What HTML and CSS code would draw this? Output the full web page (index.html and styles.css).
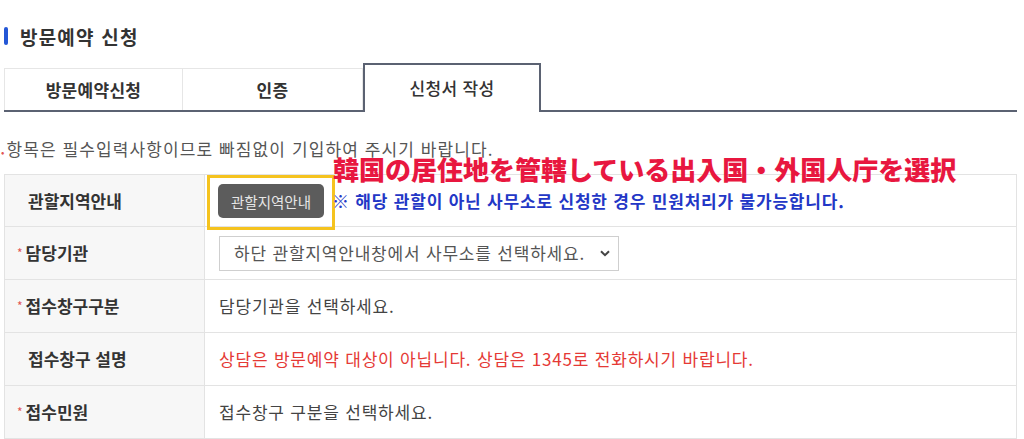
FILE: index.html
```html
<!DOCTYPE html>
<html lang="ko">
<head>
  <meta charset="UTF-8" />
  <meta name="viewport" content="width=device-width, initial-scale=1" />
  <title>방문예약 신청</title>
  <link rel="stylesheet" href="styles.css">
</head>
<body>

  <h2 class="page-title">방문예약 신청</h2>

  <ul class="tabs">
    <li class="tab">방문예약신청</li>
    <li class="tab">인증</li>
    <li class="tab tab-active">신청서 작성</li>
  </ul>

  <p class="notice"><span class="req-dot">•</span>항목은 필수입력사항이므로 빠짐없이 기입하여 주시기 바랍니다.</p>

  <div class="form-wrap">
    <div class="annotation" lang="ja">韓国の居住地を管轄している出入国・外国人庁を選択</div>
    <table class="form-table">
      <tr class="row-first">
        <th><span class="label">관할지역안내</span></th>
        <td class="guide-td">
          <div class="guide-cell">
            <div class="highlight">
              <button class="btn-guide" type="button">관할지역안내</button>
            </div>
            <span class="warn-blue">※ 해당 관할이 아닌 사무소로 신청한 경우 민원처리가 불가능합니다.</span>
          </div>
        </td>
      </tr>
      <tr>
        <th><span class="req">*</span>담당기관</th>
        <td>
          <div class="select-box">
            <span>하단 관할지역안내창에서 사무소를 선택하세요.</span>
            <svg class="chevron" width="10" height="7" viewBox="0 0 10 7"><path d="M1 1.2 L5 5.2 L9 1.2" fill="none" stroke="#444" stroke-width="2"/></svg>
          </div>
        </td>
      </tr>
      <tr>
        <th><span class="req">*</span>접수창구구분</th>
        <td>담당기관을 선택하세요.</td>
      </tr>
      <tr>
        <th><span class="label">접수창구 설명</span></th>
        <td class="warn-red">상담은 방문예약 대상이 아닙니다. 상담은 1345로 전화하시기 바랍니다.</td>
      </tr>
      <tr>
        <th><span class="req">*</span>접수민원</th>
        <td>접수창구 구분을 선택하세요.</td>
      </tr>
    </table>
  </div>

</body>
</html>
```

FILE: styles.css
```css
body {
  margin: 0;
  padding: 0 0 0 4px;
  background: #fff;
  color: #444;
  font-family: "Noto Sans CJK KR", "Noto Sans", sans-serif;
  font-size: 16px;
  width: 1013px;
}
.page-title {
  margin: 26px 0 0 0;
  height: 20px;
  display: flex;
  align-items: center;
  font-size: 19px;
  font-weight: bold;
  letter-spacing: 1.2px;
  color: #333;
}
.page-title::before {
  content: "";
  display: inline-block;
  width: 4px;
  height: 18px;
  border-radius: 2px;
  background: #2457d6;
  margin-right: 12px;
}
.tabs {
  list-style: none;
  margin: 20px 0 0 0;
  padding: 0;
  display: flex;
  align-items: flex-end;
  border-bottom: 2px solid #5b6272;
  height: 44px;
}
.tab {
  width: 177px;
  height: 41px;
  border: 1px solid #e6e6e6;
  border-bottom: 0;
  display: flex;
  align-items: center;
  justify-content: center;
  font-size: 17px;
  font-weight: bold;
  letter-spacing: 0.3px;
  color: #333;
}
.tab + .tab {
  border-left: 0;
  width: 179px;
}
.tab-active {
  width: 174px;
  height: 45px;
  margin-bottom: -2px;
  border: 2px solid #5b6272;
  border-bottom: 0;
  background: #fff;
  padding-bottom: 2px;
  font-weight: 500;
}
.tab + .tab-active {
  border-left: 2px solid #5b6272;
  width: 174px;
}
.notice {
  margin: 26px 0 0 -3px;
  font-size: 17px;
  letter-spacing: 1.1px;
  color: #555;
  line-height: 22px;
}
.req-dot {
  color: #e25555;
  font-size: 10px;
  margin-right: 1px;
}
.form-wrap {
  position: relative;
  margin-top: 11px;
}
.annotation {
  position: absolute;
  left: 329px;
  top: -20px;
  font-family: "Noto Sans CJK JP", sans-serif;
  font-weight: 900;
  font-size: 26px;
  line-height: 30px;
  color: #e8173f;
  z-index: 2;
  white-space: nowrap;
}
.form-table {
  width: 1013px;
  border-collapse: collapse;
  border: 1px solid #e3e3e3;
}
.form-table th,
.form-table td {
  border: 1px solid #e3e3e3;
  height: 52px;
  padding: 0;
  text-align: left;
  line-height: 20px;
}
.form-table th {
  width: 200px;
  background: #f7f7f7;
  font-size: 17px;
  font-weight: bold;
  color: #333;
  padding-left: 12px;
  box-sizing: border-box;
}
.form-table td {
  padding-left: 14px;
  font-size: 17px;
  letter-spacing: 0.8px;
  color: #444;
}
.row-first th,
.row-first td {
  height: 51px;
}
.label {
  padding-left: 11px;
}
.req {
  color: #e25555;
  font-size: 12px;
  font-weight: normal;
  margin-right: 3px;
  vertical-align: 2px;
}
.form-table td.guide-td {
  padding: 0 0 0 2px;
  vertical-align: top;
}
.guide-cell {
  display: flex;
  align-items: flex-start;
  height: 51px;
}
.highlight {
  box-sizing: border-box;
  height: 55px;
  border: 3px solid #f5c31e;
  padding: 6px 8px 0 8px;
}
.btn-guide {
  display: block;
  width: 106px;
  height: 34px;
  border: 0;
  border-radius: 5px;
  background: #5c5c5c;
  color: #e6e6e6;
  font-family: "Noto Sans CJK KR", sans-serif;
  font-size: 14.5px;
  letter-spacing: 0;
  padding: 0;
}
.warn-blue {
  color: #2337c6;
  font-weight: bold;
  font-size: 17px;
  letter-spacing: 0.8px;
  margin-left: -3px;
  margin-top: 16px;
}
.select-box {
  width: 400px;
  height: 35px;
  box-sizing: border-box;
  border: 1px solid #cfcfcf;
  display: flex;
  align-items: center;
  justify-content: space-between;
  padding: 0 8px 0 14px;
  color: #555;
}
.chevron {
  margin-top: 1px;
}
.form-table td.warn-red {
  color: #e53935;
}
```
